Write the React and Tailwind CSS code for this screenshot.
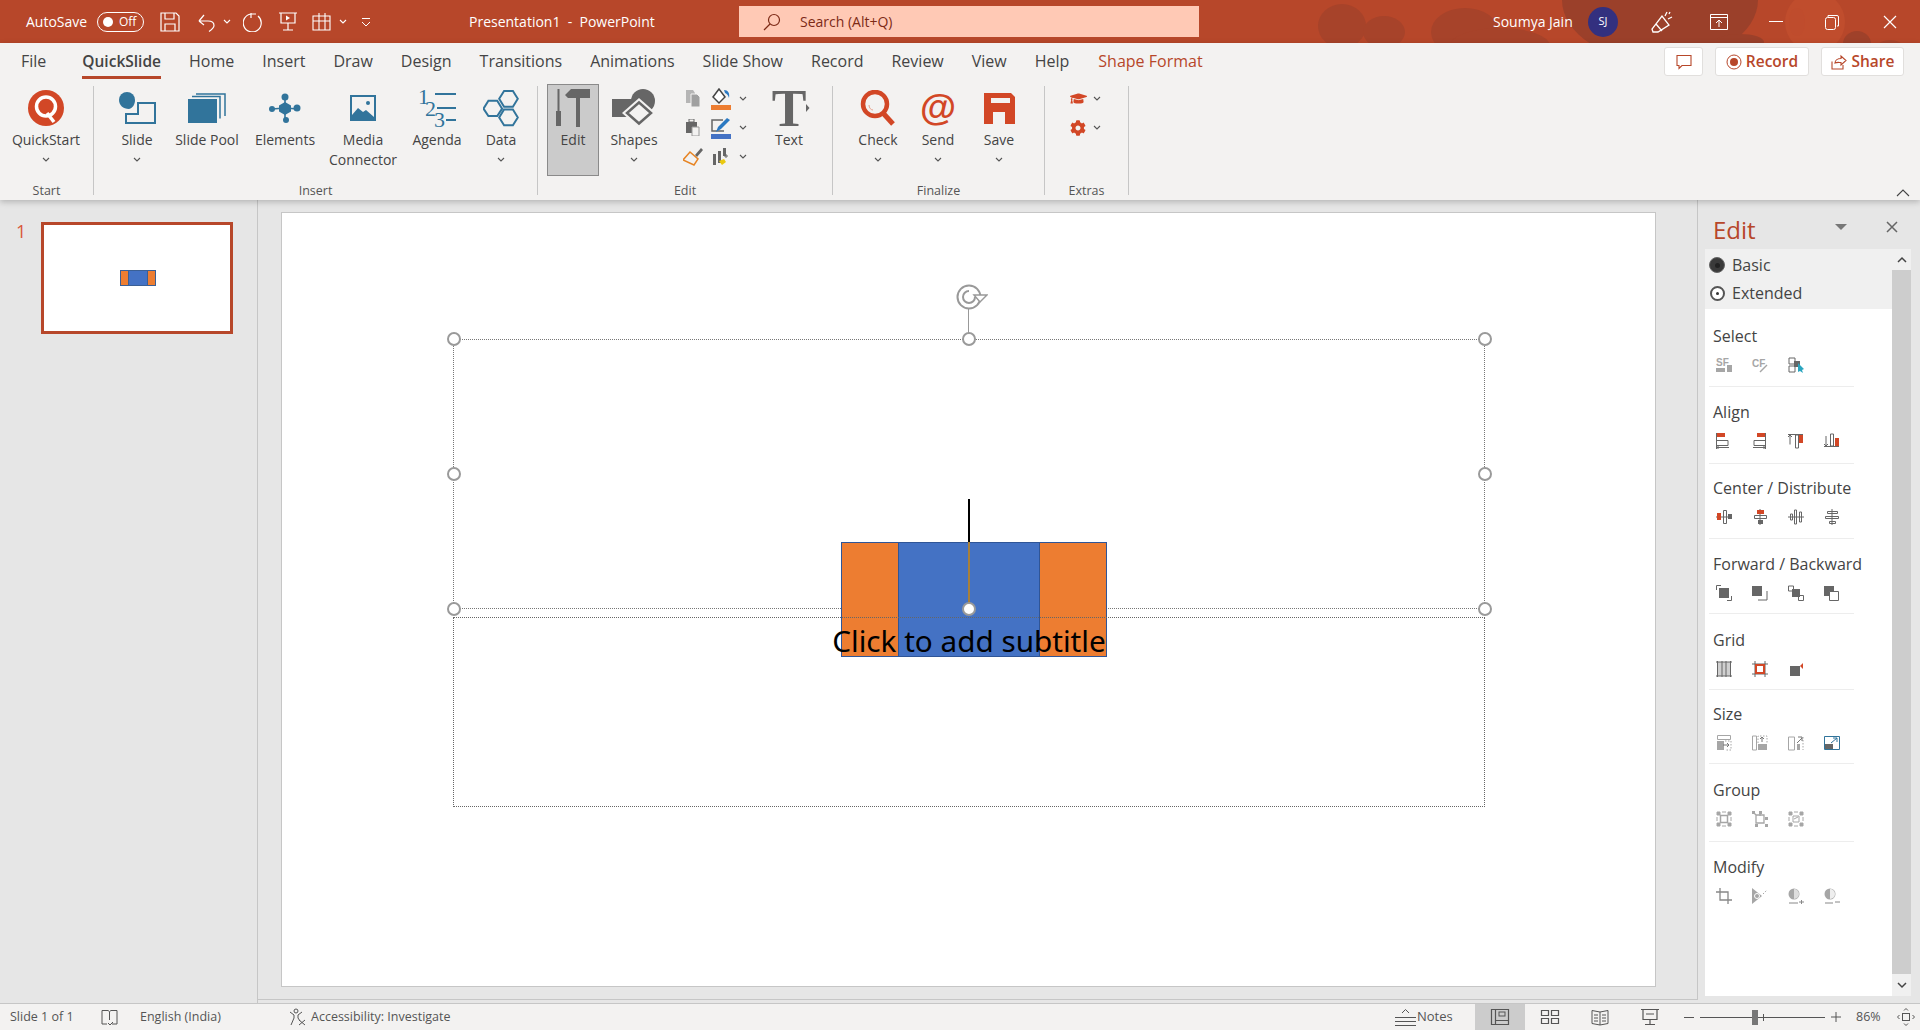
import { FaCog, FaGraduationCap } from "react-icons/fa";

const TEAL = "#31749b";
const RED = "#d24726";
const GRAY = "#666666";
const LIGHT = "#a6a6a6";

const Icon = ({ w = 16, h = 16, box, children, className = "" }) => (
  <svg width={w} height={h} viewBox={box || `0 0 ${w} ${h}`} fill="none" className={`shrink-0 ${className}`}>
    {children}
  </svg>
);

const Chevron = ({ color = "#555555", className = "" }) => (
  <Icon w={8} h={5} className={className}>
    <path d="M1 1l3 3 3-3" stroke={color} strokeWidth="1.1" />
  </Icon>
);

// Title bar drawings
const QatSave = () => (
  <Icon w={20} h={20}>
    <path d="M1 1h15l3 3v15H1z M5 1v6h9V1 M5 19v-7h10v7" stroke="white" strokeWidth="1.2" />
  </Icon>
);
const QatUndo = () => (
  <Icon w={19} h={20}>
    <path d="M2 9l5-6 M2 9h9c4 0 6 2 6 4.500 0 2-2 4-5 6 M2 9l5 4" stroke="white" strokeWidth="1.2" />
  </Icon>
);
const QatRedo = () => (
  <Icon w={21} h={20}>
    <path d="M8 2A9 9 0 1 0 15 4 M8 1v5 M8 2l5 0" stroke="white" strokeWidth="1.2" />
  </Icon>
);
const QatPresent = () => (
  <Icon w={18} h={20}>
    <path d="M0 1h18 M2 1v10h14V1 M9 11v7 M4 18h10" stroke="white" strokeWidth="1.2" />
    <path d="M7 3.500l4 2.500-4 2.500z" fill="white" />
  </Icon>
);
const QatTable = () => (
  <Icon w={19} h={20}>
    <path d="M1 4h17v14H1z M1 9h17 M7 1v17 M13 1v17" stroke="white" strokeWidth="1.1" />
  </Icon>
);

const TitleBlotches = () => (
  <svg width="1920" height="43" viewBox="0 0 1920 43" className="absolute inset-0 pointer-events-none">
    <ellipse cx="1342" cy="26" rx="24" ry="22" fill="#a7432a" />
    <ellipse cx="1384" cy="32" rx="21" ry="16" fill="#a7432a" />
    <ellipse cx="1465" cy="32" rx="34" ry="24" fill="#a7432a" />
    <ellipse cx="1500" cy="46" rx="50" ry="18" fill="#a7432a" />
    <ellipse cx="1660" cy="0" rx="98" ry="62" fill="#9b402a" />
    <ellipse cx="1740" cy="42" rx="24" ry="8" fill="#9b402a" />
    <ellipse cx="1815" cy="22" rx="30" ry="30" fill="#c04d2d" />
    <ellipse cx="1797" cy="22" rx="8" ry="14" fill="#bf4c2d" />
    <ellipse cx="1857" cy="44" rx="14" ry="13" fill="#9f412a" />
    <ellipse cx="1890" cy="46" rx="12" ry="6" fill="#a7432a" />
  </svg>
);

// Ribbon drawings
const QuickStartIcon = () => (
  <Icon w={36} h={36}>
    <circle cx="18" cy="18" r="18" fill={RED} />
    <circle cx="18" cy="16.500" r="9.500" stroke="white" strokeWidth="3.500" />
    <path d="M19 23l7 9" stroke="white" strokeWidth="3.500" />
  </Icon>
);
const SlideIcon = () => (
  <Icon w={37} h={32}>
    <path d="M0 8a8 8 0 1 1 16 0c0 4-2 8-6 9C4 17 0 13 0 8z" fill={TEAL} />
    <path d="M19 11h17v20H7V22h12z" stroke={TEAL} strokeWidth="2" />
  </Icon>
);
const SlidePoolIcon = () => (
  <Icon w={38} h={30}>
    <rect x="0" y="6" width="29" height="24" fill={TEAL} />
    <path d="M4 3.500h28v22 M8 1h29v22" stroke={TEAL} strokeWidth="1.500" />
  </Icon>
);
const ElementsIcon = () => (
  <Icon w={32} h={30}>
    <path d="M3 16l13-1 13 1 M16 3v25" stroke={TEAL} strokeWidth="1.600" />
    <path d="M16 9l6 3.500v6L16 22l-6-3.500v-6z" fill={TEAL} />
    <circle cx="16" cy="4" r="3.500" fill={TEAL} />
    <circle cx="3" cy="16" r="3" fill={TEAL} />
    <circle cx="28" cy="15" r="3.500" fill={TEAL} />
    <circle cx="17" cy="27" r="3" fill={TEAL} />
  </Icon>
);
const MediaIcon = () => (
  <Icon w={26} h={26}>
    <rect width="26" height="26" fill={TEAL} />
    <rect x="2" y="2" width="22" height="20" fill="#f3f2f1" />
    <path d="M2 20l6-7 5 4 3-2 8 7v4H2z" fill={TEAL} />
    <circle cx="18" cy="8" r="2" fill={TEAL} />
  </Icon>
);
const AgendaIcon = () => (
  <svg width="39" height="38" viewBox="0 0 39 38" className="shrink-0 overflow-visible">
    <text fontFamily="Liberation Serif" fontSize="22" fill={TEAL}>
      <tspan x="0" y="15">1</tspan>
      <tspan x="7" y="27">2</tspan>
      <tspan x="16" y="38">3</tspan>
    </text>
    <path d="M17 5h21 M19 19h19 M28 31h10" stroke={TEAL} strokeWidth="2" />
  </svg>
);
const DataIcon = () => (
  <Icon w={36} h={37}>
    <path d="M21 1h9l5 8-5 8h-9l-5-8z M5 11h9l5 8-5 7.500H5L0 19z M21 20h9l5 8-5 8h-9l-5-8z" transform="translate(.5 0) scale(.98)" stroke={TEAL} strokeWidth="2" />
  </Icon>
);
const ToolsIcon = () => (
  <Icon w={34} h={38}>
    <rect x="1.500" y="0" width="2" height="22" fill={GRAY} />
    <rect x="0" y="22" width="5" height="15" fill={GRAY} />
    <path d="M9 6l6-6h19v9H24v29h-4V9h-8z" fill={GRAY} />
  </Icon>
);
const ShapesIcon = () => (
  <Icon w={44} h={38}>
    <path d="M0 10h20v18H0z" fill={GRAY} />
    <circle cx="31" cy="12" r="12" fill={GRAY} />
    <path d="M27 9l17 15-17 15-17-15z" fill="#f3f2f1" />
    <path d="M27 13.500l12 10.500-12 10.500-12-10.500z" fill="#f3f2f1" stroke={GRAY} strokeWidth="2.500" />
  </Icon>
);
const CopyIcon = () => (
  <Icon w={16} h={17}>
    <path d="M1 0h7l2 3v10H1z" fill="#b5b5b5" />
    <path d="M6 4h6l3 3v10H6z" fill="#a0a0a0" stroke="#f3f2f1" />
  </Icon>
);
const BucketIcon = () => (
  <Icon w={20} h={22}>
    <path d="M8 1l-6 8 6 6 6-6z" stroke="#444444" strokeWidth="1.500" fill="white" />
    <path d="M13 2c4 0 6 3 5 8-1-3-2-4-4-5z" fill="#2b79c2" />
    <rect y="17" width="20" height="5" fill="#ed7d31" />
  </Icon>
);
const PasteIcon = () => (
  <Icon w={14} h={17}>
    <path d="M0 3h11v11H0z" fill={GRAY} />
    <rect x="3" y="0" width="5" height="3" fill="#f3f2f1" stroke={GRAY} />
    <path d="M6 8h7v9H6z" fill="#f3f2f1" stroke="#999999" />
  </Icon>
);
const PenBoxIcon = () => (
  <Icon w={20} h={22}>
    <path d="M12 3H1v11h12" stroke={GRAY} strokeWidth="1.500" />
    <path d="M5 15l2-5 9-9 3 2-9 9z" fill="#2b79c2" />
    <rect y="17" width="20" height="5" fill="#4472c4" />
  </Icon>
);
const BrushIcon = () => (
  <Icon w={20} h={19}>
    <path d="M12 8l6-7 2 2-6 7z" fill="#666666" />
    <path d="M7 5l8 7-4 6-11-5z" fill="#f2f2f2" stroke="#e78423" strokeWidth="1.500" />
  </Icon>
);
const ChartIcon = () => (
  <Icon w={16} h={17}>
    <path d="M0 6h3v11H0z M5 3h3v12H5z M10 0h3v8h-3z" fill={GRAY} />
    <path d="M6 13l5-2 2 3-4 3z" fill="#eac90f" />
    <path d="M13 6v4 M11 8h4" stroke="#666666" />
  </Icon>
);
const TextIcon = () => (
  <svg width="44" height="38" viewBox="0 0 44 38" className="shrink-0 overflow-visible">
    <text x="22" y="37" textAnchor="middle" fontFamily="Liberation Serif" fontWeight="700" fontSize="52" fill={GRAY}>T</text>
    <path d="M39 15l3.500 4-3.500 4z" fill={GRAY} />
  </svg>
);
const CheckIcon = () => (
  <Icon w={36} h={36}>
    <circle cx="15" cy="14" r="12" stroke={RED} strokeWidth="4.500" />
    <path d="M23 23l10 11" stroke={RED} strokeWidth="5" />
    <path d="M9 15c0 3 2 5 4 5" stroke="#e8a08a" strokeWidth="1" />
  </Icon>
);
const SendIcon = () => (
  <svg width="34" height="36" viewBox="0 0 34 36" className="shrink-0 overflow-visible">
    <text x="17" y="30" textAnchor="middle" fontFamily="Liberation Sans" fontSize="37" fontWeight="700" fill={RED}>@</text>
  </svg>
);
const SaveRedIcon = () => (
  <Icon w={31} h={31}>
    <path d="M0 0h27l4 4v27H0z" fill={RED} />
    <rect x="7" y="5" width="19" height="5" fill="#f3f2f1" />
    <rect x="9" y="19" width="12" height="12" fill="#f3f2f1" />
  </Icon>
);

// Task pane drawings
const c = { g: GRAY, r: RED, l: LIGHT };
const SF = () => (
  <svg width="16" height="16" viewBox="0 0 16 16" className="overflow-visible">
    <text x="0" y="9" fontFamily="Liberation Sans" fontWeight="700" fontSize="10" fill={c.l}>SF</text>
    <path d="M0 11h9v4H0z M11 8h5v7h-5z" fill={c.l} />
  </svg>
);
const CF = () => (
  <svg width="16" height="16" viewBox="0 0 16 16" className="overflow-visible">
    <text x="0" y="10" fontFamily="Liberation Sans" fontWeight="700" fontSize="10" fill={c.l}>CF</text>
    <path d="M8 15l7-7" stroke={c.l} strokeWidth="1.500" />
  </svg>
);
const SelIcon = () => (
  <Icon>
    <path d="M1 1h6v6H1z M1 9h6v6H1z" stroke={c.g} />
    <rect x="6" y="4" width="6" height="6" fill={c.g} />
    <path d="M10 6l6 6-2 1 1 3-3-2-2 1z" fill="#2aa5bf" />
  </Icon>
);
const AlignA = () => (
  <Icon>
    <path d="M0.500 0v16 M1 7.500h11v5H1" stroke={c.g} />
    <path d="M1 14.500h12 M1 14.500l2-2 M1 14.500l2 2" stroke={c.g} />
    <rect x="1" y="0" width="8" height="4" fill={c.r} />
  </Icon>
);
const AlignB = () => (
  <Icon>
    <path d="M13.500 0v16 M13 7.500H2v5h11" stroke={c.g} />
    <path d="M13 14.500H1 M13 14.500l-2-2 M13 14.500l-2 2" stroke={c.g} />
    <rect x="5" y="0" width="8" height="4" fill={c.r} />
  </Icon>
);
const AlignC = () => (
  <Icon>
    <path d="M0 1.500h15 M2 1.500v10 M0 4l2-2 2 2 M7.500 2h3v13h-3z" stroke={c.g} />
    <rect x="11" y="2" width="4" height="8" fill={c.r} />
  </Icon>
);
const AlignD = () => (
  <Icon>
    <path d="M0 13.500h15 M2 3v10 M0 11l2 2 2-2 M6.500 1h3v12h-3z" stroke={c.g} />
    <rect x="11" y="5" width="4" height="8" fill={c.r} />
  </Icon>
);
const CenterA = () => (
  <Icon>
    <path d="M0 8h16 M7.500 1.500h3v13h-3z" stroke={c.g} />
    <rect x="1" y="4" width="4" height="7" fill={c.r} />
    <rect x="12" y="5" width="4" height="5" fill={c.g} />
  </Icon>
);
const CenterB = () => (
  <Icon>
    <path d="M8 0v16 M2.500 6.500h12v3h-12z" stroke={c.g} fill="#fff" />
    <rect x="5" y="1" width="7" height="4" fill={c.r} />
    <rect x="6" y="11" width="5" height="4" fill={c.g} />
  </Icon>
);
const CenterC = () => (
  <Icon>
    <path d="M0 8h16 M2.500 5h2v6h-2z M6.500 1h2v14h-2z M11.500 3h2v10h-2z" stroke={c.g} fill="#fff" />
  </Icon>
);
const CenterD = () => (
  <Icon>
    <path d="M8 0v16 M3.500 2.500h10v2h-10z M1.500 7.500h13v2h-13z M5.500 12.500h6v2h-6z" stroke={c.g} fill="#fff" />
  </Icon>
);
const FwdA = () => (
  <Icon>
    <path d="M0.500 5V0.500H5 M15.500 11v4.500H11" stroke={c.g} />
    <rect x="3" y="3" width="10" height="10" fill={c.g} />
  </Icon>
);
const FwdB = () => (
  <Icon>
    <path d="M15 6v9H6" stroke={c.g} />
    <rect x="0" y="1" width="10" height="10" fill={c.g} />
  </Icon>
);
const FwdC = () => (
  <Icon>
    <path d="M0.500 1h5v5h-5z M10.500 10.500h5v5h-5z" stroke={c.g} />
    <rect x="4" y="4" width="8" height="8" fill={c.g} />
  </Icon>
);
const FwdD = () => (
  <Icon>
    <rect x="0" y="1" width="10" height="10" fill={c.g} />
    <path d="M5.500 6.500h9v9h-9z" stroke={c.g} fill="#fff" />
  </Icon>
);
const GridA = () => (
  <Icon>
    <rect x="2" y="1" width="12" height="14" fill="#d0d0d0" />
    <path d="M0 1h16 M0 15h16 M1.500 0v16 M6 0v16 M10 0v16 M14.500 0v16" stroke={c.g} />
  </Icon>
);
const GridB = () => (
  <Icon>
    <path d="M3 0v16 M13 0v16 M0 3h16 M0 13h16" stroke={c.g} />
    <path d="M4 4h8v8H4z" fill="#fff" stroke={c.r} strokeWidth="2" />
  </Icon>
);
const GridC = () => (
  <Icon>
    <rect x="2" y="5" width="10" height="10" fill={c.g} />
    <path d="M12 5l3-3v6z" fill={c.r} />
  </Icon>
);
const SizeA = () => (
  <Icon>
    <path d="M1.500 0.500h13v4h-13z" stroke={c.l} />
    <rect x="1" y="6" width="7" height="9" fill={c.l} />
    <path d="M9 6h6v9H9" stroke={c.l} strokeDasharray="1.500 1.500" />
    <path d="M7 10h6 M11 8l2 2-2 2" stroke="#777" />
  </Icon>
);
const SizeB = () => (
  <Icon>
    <path d="M0.500 1h4v14h-4z" stroke={c.l} />
    <rect x="6" y="9" width="9" height="6" fill={c.l} />
    <path d="M6 8V1h9v7" stroke={c.l} strokeDasharray="1.500 1.500" />
    <path d="M10 7V2 M8 4l2-2 2 2" stroke="#777" />
  </Icon>
);
const SizeC = () => (
  <Icon>
    <path d="M0.500 2h6v13h-6z" stroke={c.l} />
    <rect x="9" y="9" width="3" height="6" fill={c.l} />
    <path d="M15 2v13" stroke={c.l} strokeDasharray="1.500 1.500" />
    <path d="M9 8l5-5 M10 2h4v4" stroke="#777" />
  </Icon>
);
const SizeD = () => (
  <Icon>
    <path d="M0.500 1.500h15v13h-15z" stroke={TEAL} fill="#fff" />
    <rect x="1" y="9" width="8" height="5" fill={c.g} />
    <path d="M7 8l6-5 M9 3h4v4" stroke={TEAL} />
  </Icon>
);
const GroupA = () => (
  <Icon>
    <path d="M1 1h3v3H1z M12 1h3v3h-3z M1 12h3v3H1z M12 12h3v3h-3z" fill={c.l} stroke={c.l} />
    <path d="M6 1h4 M6 15h4 M1 6v4 M15 6v4" stroke={c.l} />
    <path d="M4.500 4.500h7v7h-7z" stroke={c.l} strokeWidth="1.500" />
  </Icon>
);
const GroupB = () => (
  <Icon>
    <path d="M0 0h3v3H0z M7 0h3v3H7z M13 6h3v3h-3z M3 13h3v3H3z M13 13h3v3h-3z" fill={c.l} />
    <path d="M2 2l2 2 M4 4h8v8H4z M8 3v2" stroke={c.l} strokeWidth="1.300" />
  </Icon>
);
const GroupC = () => (
  <Icon>
    <path d="M1 1h3v3H1z M12 1h3v3h-3z M1 12h3v3H1z M12 12h3v3h-3z" stroke={c.l} fill={c.l} />
    <path d="M6 1h4 M6 15h4 M1 6v4 M15 6v4" stroke={c.l} />
    <path d="M5 5h6v6H5z M6 8l4-2" stroke={c.l} />
  </Icon>
);
const ModA = () => (
  <Icon>
    <path d="M4 0v12h12 M0 4h12v12" stroke="#888888" strokeWidth="1.300" />
  </Icon>
);
const ModB = () => (
  <Icon>
    <path d="M0 0l10 8-10 8z" fill={c.l} />
    <path d="M11 6l4-4" stroke={c.l} strokeDasharray="1.500 1.500" />
    <circle cx="5" cy="8" r="2.500" stroke="#fff" />
  </Icon>
);
const ModC = () => (
  <Icon>
    <circle cx="6" cy="6" r="5.500" fill={c.l} />
    <path d="M6 1a5 5 0 0 1 0 10z" fill="#dddddd" />
    <path d="M1 15h9 M11 14h5 M13.500 12v4" stroke="#888" />
  </Icon>
);
const ModD = () => (
  <Icon>
    <circle cx="6" cy="6" r="5.500" fill={c.l} />
    <path d="M6 1a5 5 0 0 1 0 10z" fill="#eeeeee" />
    <path d="M1 15h8 M11 14h5" stroke="#888" />
  </Icon>
);

const sections = [
  { title: "Select", box: "h-[78px] pt-[15px]", icons: [SF, CF, SelIcon] },
  { title: "Align", box: "h-[77px] pt-[13px]", icons: [AlignA, AlignB, AlignC, AlignD] },
  { title: "Center / Distribute", box: "h-[75px] pt-[12px]", icons: [CenterA, CenterB, CenterC, CenterD] },
  { title: "Forward / Backward", box: "h-[75px] pt-[13px]", icons: [FwdA, FwdB, FwdC, FwdD] },
  { title: "Grid", box: "h-[76px] pt-[14px]", icons: [GridA, GridB, GridC] },
  { title: "Size", box: "h-[74px] pt-[12px]", icons: [SizeA, SizeB, SizeC, SizeD] },
  { title: "Group", box: "h-[78px] pt-[14px]", icons: [GroupA, GroupB, GroupC] },
  { title: "Modify", box: "h-[76px] pt-[13px]", icons: [ModA, ModB, ModC, ModD], last: true },
];

const tabs = ["Home", "Insert", "Draw", "Design", "Transitions", "Animations", "Slide Show", "Record", "Review", "View", "Help"];

const BigButton = ({ icon, label, label2, chevron, className = "" }) => (
  <div className={`flex flex-col items-center shrink-0 ${className}`}>
    <div className="h-[44px] w-full flex items-center justify-center">{icon}</div>
    <span className="leading-[20px] whitespace-nowrap">{label}</span>
    {label2 && <span className="leading-[20px] whitespace-nowrap">{label2}</span>}
    {chevron && <Chevron className="mt-[7px]" />}
  </div>
);

const Group = ({ label, className, children }) => (
  <div className={`h-[109px] shrink-0 border-r border-[#c6c6c6] flex flex-col ${className}`}>
    <div className="h-[96px] flex">{children}</div>
    <div className="h-[13px] leading-[18px] text-center text-[12.5px] text-[#555555]">{label}</div>
  </div>
);

const SmallRow = ({ a, b, chevronClass = "" }) => (
  <div className="h-[29px] flex items-center">
    <div className="w-[30px] flex justify-center">{a}</div>
    <div className="w-[26px] flex justify-center">{b}</div>
    <Chevron className={`ml-[5px] ${chevronClass}`} />
  </div>
);

const Handle = ({ className }) => (
  <div className={`absolute w-[14px] h-[14px] rounded-full bg-white border-2 border-[#9a9a9a] ${className}`} />
);

const ViewIcon = ({ children }) => <Icon w={20} h={18}>{children}</Icon>;

export default function App() {
  return (
    <div className="w-[1920px] h-[1030px] overflow-hidden flex flex-col bg-[#e6e6e6] text-[#444444] [font-family:'Open_Sans',sans-serif]">
      {/* Title bar */}
      <div className="relative h-[43px] shrink-0 flex items-center bg-[#b7472a] text-white text-[14px]">
        <TitleBlotches />
        <div className="relative flex items-center w-full">
          <span className="ml-[26px] w-[62px] whitespace-nowrap">AutoSave</span>
          <div className="ml-[9px] w-[47px] h-[20px] rounded-full border border-white flex items-center pl-[5px] gap-[6px]">
            <span className="w-[10px] h-[10px] rounded-full bg-white" />
            <span className="text-[12px] leading-none">Off</span>
          </div>
          <div className="ml-[16px] flex items-center"><QatSave /></div>
          <div className="ml-[17px] flex items-center"><QatUndo /></div>
          <Chevron color="#ffffff" className="ml-[7px]" />
          <div className="ml-[12px] flex items-center"><QatRedo /></div>
          <div className="ml-[15px] flex items-center"><QatPresent /></div>
          <div className="ml-[15px] flex items-center"><QatTable /></div>
          <Chevron color="#ffffff" className="ml-[8px]" />
          <Icon w={10} h={10} className="ml-[14px]">
            <path d="M1 1.500h8 M1 5l4 4 4-4" stroke="white" />
          </Icon>
          <span className="ml-[98px] w-[190px] whitespace-nowrap">Presentation1&nbsp; -&nbsp; PowerPoint</span>
          <div className="ml-[80px] w-[460px] h-[31px] bg-[#ffc9b5] text-[#7d2a16] flex items-center">
            <Icon w={18} h={18} className="ml-[24px]">
              <circle cx="11" cy="7" r="5.500" stroke="#7d2a16" strokeWidth="1.200" />
              <path d="M7 11l-6 6" stroke="#7d2a16" strokeWidth="1.200" />
            </Icon>
            <span className="ml-[19px]">Search (Alt+Q)</span>
          </div>
          <span className="ml-[294px] w-[84px] whitespace-nowrap">Soumya Jain</span>
          <div className="ml-[11px] w-[30px] h-[30px] rounded-full bg-[#33307f] flex items-center justify-center text-[11px]">SJ</div>
          <Icon w={22} h={24} className="ml-[33px]">
            <path d="M2 22L1 19 11 6l7 9-11 7z M5 14l6 7 M14 6l2-4 M17 9l4-2 M18 4l1-2" stroke="white" strokeWidth="1.300" />
          </Icon>
          <Icon w={18} h={16} className="ml-[37px]">
            <path d="M0.500 0.500h17v15H0.500z M1 3.500h16 M9 13V6 M6 9l3-3 3 3" stroke="white" />
          </Icon>
          <div className="ml-[41px] w-[14px] h-[1px] bg-white" />
          <Icon w={14} h={16} className="ml-[42px]">
            <path d="M3 3V1.500h9a1.500 1.500 0 0 1 1.500 1.500v9H12" stroke="white" />
            <rect x="0.500" y="3.500" width="10" height="12" rx="2" stroke="white" />
          </Icon>
          <Icon w={14} h={14} className="ml-[44px]">
            <path d="M1 1l12 12 M13 1L1 13" stroke="white" strokeWidth="1.200" />
          </Icon>
        </div>
      </div>

      {/* Tabs and ribbon */}
      <div className="relative z-10 h-[157px] shrink-0 bg-[#f3f2f1] shadow-[0_2px_6px_rgba(0,0,0,0.22)] flex flex-col">
        <div className="h-[37px] flex items-stretch text-[16px] text-[#444444]">
          <span className="ml-[21px] mr-[36px] leading-[37px]">File</span>
          <span className="font-semibold leading-[37px] h-[36px] border-b-[3px] border-[#b7472a] text-[15.5px]">QuickSlide</span>
          <div className="flex ml-[28px] gap-[28px]">
            {tabs.map((t) => (
              <span key={t} className="leading-[37px] whitespace-nowrap">{t}</span>
            ))}
            <span className="leading-[37px] whitespace-nowrap text-[#b7472a] ml-[1px]">Shape Format</span>
          </div>
          <div className="ml-auto mr-[16px] mt-[4px] flex gap-[12px] h-[29px] text-[#b7472a] font-semibold text-[15.5px]">
            <div className="w-[39px] bg-white border border-[#e1dfdd] rounded-[3px] flex items-center justify-center">
              <Icon w={16} h={16}>
                <path d="M1 1.500h14v10H6L3 14.500v-3H1z" stroke="#b7472a" strokeWidth="1.100" />
              </Icon>
            </div>
            <div className="w-[94px] bg-white border border-[#e1dfdd] rounded-[3px] flex items-center justify-center gap-[4px]">
              <Icon w={16} h={16}>
                <circle cx="8" cy="8" r="7" stroke="#b7472a" />
                <circle cx="8" cy="8" r="4" fill="#b7472a" />
              </Icon>
              <span>Record</span>
            </div>
            <div className="w-[83px] bg-white border border-[#e1dfdd] rounded-[3px] flex items-center justify-center gap-[5px]">
              <Icon w={16} h={16}>
                <path d="M1 7.500v7.500h11v-4 M4 9c0-3 3-4.500 6-4.500V2l5 4.500L10 11V8.500C8 8.500 6 8 4 9z" stroke="#b7472a" strokeWidth="1.100" />
              </Icon>
              <span>Share</span>
            </div>
          </div>
        </div>

        <div className="relative mt-[6px] flex text-[14px] text-[#444444]">
          <Group label="Start" className="w-[94px]">
            <BigButton className="w-[70px] ml-[11px]" icon={<QuickStartIcon />} label="QuickStart" chevron />
          </Group>
          <Group label="Insert" className="w-[444px]">
            <BigButton className="w-[60px] ml-[13px]" icon={<SlideIcon />} label="Slide" chevron />
            <BigButton className="w-[72px] ml-[4px]" icon={<SlidePoolIcon />} label="Slide Pool" />
            <BigButton className="w-[64px] ml-[10px]" icon={<ElementsIcon />} label="Elements" />
            <BigButton className="w-[76px] ml-[8px]" icon={<MediaIcon />} label="Media" label2="Connector" />
            <BigButton className="w-[62px] ml-[5px]" icon={<AgendaIcon />} label="Agenda" />
            <BigButton className="w-[50px] ml-[8px]" icon={<DataIcon />} label="Data" chevron />
          </Group>
          <Group label="Edit" className="w-[295px]">
            <BigButton
              className="w-[52px] h-[92px] ml-[9px] -mt-[2px] pt-[1px] bg-[#cbcbcb] border border-[#8a8a8a]"
              icon={<ToolsIcon />}
              label="Edit"
            />
            <BigButton className="w-[60px] ml-[5px]" icon={<ShapesIcon />} label="Shapes" chevron />
            <div className="ml-[14px] -mt-[2px] w-[72px] shrink-0">
              <SmallRow a={<CopyIcon />} b={<BucketIcon />} />
              <SmallRow a={<PasteIcon />} b={<PenBoxIcon />} />
              <SmallRow a={<BrushIcon />} b={<ChartIcon />} chevronClass="-ml-[1px]" />
            </div>
            <BigButton className="w-[50px] ml-[14px]" icon={<TextIcon />} label="Text" />
          </Group>
          <Group label="Finalize" className="w-[212px]">
            <BigButton className="w-[50px] ml-[20px]" icon={<CheckIcon />} label="Check" chevron />
            <BigButton className="w-[50px] ml-[10px]" icon={<SendIcon />} label="Send" chevron />
            <BigButton className="w-[50px] ml-[11px]" icon={<SaveRedIcon />} label="Save" chevron />
          </Group>
          <Group label="Extras" className="w-[84px]">
            <div className="ml-[21px] -mt-[2px] w-[44px]">
              <div className="h-[29px] flex items-center">
                <div className="w-[24px] flex justify-center"><FaGraduationCap size={17} color={RED} /></div>
                <Chevron className="ml-[3px]" />
              </div>
              <div className="h-[29px] flex items-center">
                <div className="w-[24px] flex justify-center"><FaCog size={16} color={RED} /></div>
                <Chevron className="ml-[3px]" />
              </div>
            </div>
          </Group>
          <Icon w={14} h={8} className="absolute right-[10px] top-[103px]">
            <path d="M1 7l6-6 6 6" stroke="#444444" strokeWidth="1.100" />
          </Icon>
        </div>
      </div>

      {/* Workspace */}
      <div className="h-[803px] shrink-0 flex">
        {/* Thumbnails */}
        <div className="w-[258px] shrink-0 border-r border-[#c6c6c6] flex items-start pt-[22px]">
          <span className="ml-[16px] w-[25px] text-[18px] leading-[18px] text-[#d9583a]">1</span>
          <div className="w-[192px] h-[112px] border-[3px] border-[#b7472a] bg-white flex items-center justify-center">
            <div className="ml-[2px] w-[36px] h-[16px] flex border border-[#3a5f95]">
              <div className="w-[7px] bg-[#ed7d31]" />
              <div className="flex-1 bg-[#4472c4] border-x border-[#3a5f95]" />
              <div className="w-[7px] bg-[#ed7d31]" />
            </div>
          </div>
        </div>

        {/* Slide area */}
        <div className="w-[1440px] shrink-0 h-[800px] border-r border-b border-[#c6c6c6] pl-[23px] pt-[12px]">
          <div className="relative w-[1375px] h-[775px] bg-white border border-[#c6c6c6]">
            {/* Title placeholder selection */}
            <div className="absolute left-[171px] top-[126px] w-[1032px] h-[270px] border border-dotted border-[#777777]" />
            {/* Stack of rectangles */}
            <div className="absolute left-[559px] top-[329px] w-[266px] h-[115px] flex border border-[#2f5597]">
              <div className="w-[56px] bg-[#ed7d31]" />
              <div className="flex-1 bg-[#4472c4] border-x border-[#2f5597]" />
              <div className="w-[66px] bg-[#ed7d31]" />
            </div>
            <div className="absolute left-[686px] top-[286px] w-[2px] h-[43px] bg-black" />
            <div className="absolute left-[686px] top-[329px] w-[2px] h-[64px] bg-[#a8803a]" />
            {/* Subtitle placeholder */}
            <div className="absolute left-[171px] top-[404px] w-[1032px] h-[190px] border border-dotted border-[#666666] text-center text-black text-[29.7px] leading-[46px] [font-family:'Noto_Sans',sans-serif]">
              Click to add subtitle
            </div>
            {/* Handles and rotate grip */}
            <div className="absolute left-[686px] top-[96px] w-[1px] h-[26px] bg-[#999999]" />
            <Icon w={32} h={26} className="absolute left-[674px] top-[71px]">
              <circle cx="13" cy="13" r="11.500" stroke="#999999" strokeWidth="2" />
              <path d="M13 7a6 6 0 1 0 6 6" stroke="#999999" strokeWidth="2" />
              <path d="M18 11l6 7 7-7z" fill="white" stroke="#999999" strokeWidth="1.500" />
            </Icon>
            <Handle className="left-[165px] top-[119px]" />
            <Handle className="left-[680px] top-[119px]" />
            <Handle className="left-[1196px] top-[119px]" />
            <Handle className="left-[165px] top-[254px]" />
            <Handle className="left-[1196px] top-[254px]" />
            <Handle className="left-[165px] top-[389px]" />
            <Handle className="left-[680px] top-[389px]" />
            <Handle className="left-[1196px] top-[389px]" />
          </div>
        </div>

        {/* Edit task pane */}
        <div className="flex-1 min-w-0 flex flex-col pl-[7px]">
          <div className="h-[49px] shrink-0 flex items-center pl-[8px]">
            <span className="text-[24px] leading-none text-[#b7472a] w-[123px] mt-[11px]">Edit</span>
            <Icon w={12} h={6} className="ml-[-1px] mt-[4px]">
              <path d="M0 0h12L6 6z" fill="#777777" />
            </Icon>
            <Icon w={12} h={12} className="ml-[39px] mt-[4px]">
              <path d="M1 1l10 10 M11 1L1 11" stroke="#666666" strokeWidth="1.500" />
            </Icon>
          </div>
          <div className="h-[747px] flex">
            <div className="w-[187px] shrink-0 bg-white flex flex-col text-[16px] text-[#444444]">
              <div className="h-[60px] shrink-0 bg-[#f0f0f0] flex flex-col pt-[2px]">
                <div className="h-[28px] flex items-center pl-[4px]">
                  <div className="w-[16px] h-[16px] rounded-full bg-[#3a3a3a] border border-[#666666] flex items-center justify-center">
                    <div className="w-[5px] h-[5px] rounded-full bg-[#222222]" />
                  </div>
                  <span className="ml-[7px]">Basic</span>
                </div>
                <div className="h-[28px] flex items-center pl-[5px]">
                  <div className="w-[15px] h-[15px] rounded-full bg-white border-2 border-[#555555] flex items-center justify-center">
                    <div className="w-[3px] h-[3px] rounded-full bg-[#333333]" />
                  </div>
                  <span className="ml-[7px]">Extended</span>
                </div>
              </div>
              {sections.map((s) => (
                <div key={s.title} className={`${s.box} shrink-0 ml-[4px] w-[145px] flex flex-col ${s.last ? "" : "border-b border-[#ededed]"}`}>
                  <span className="pl-[4px] leading-[24px] whitespace-nowrap">{s.title}</span>
                  <div className="flex -ml-[3px] mt-[9px]">
                    {s.icons.map((Ic, i) => (
                      <div key={i} className="w-[36px] flex justify-center"><Ic /></div>
                    ))}
                  </div>
                </div>
              ))}
            </div>
            <div className="w-[19px] shrink-0 flex flex-col bg-[#cdcdcd]">
              <div className="h-[21px] bg-[#f0f0f0] flex items-center justify-center">
                <Icon w={10} h={7}>
                  <path d="M1 6l4-4 4 4" stroke="#444444" strokeWidth="1.500" />
                </Icon>
              </div>
              <div className="flex-1" />
              <div className="h-[22px] bg-[#f0f0f0] flex items-center justify-center">
                <Icon w={10} h={7}>
                  <path d="M1 1l4 4 4-4" stroke="#444444" strokeWidth="1.500" />
                </Icon>
              </div>
            </div>
          </div>
        </div>
      </div>

      {/* Status bar */}
      <div className="h-[27px] shrink-0 border-t border-[#c6c6c6] bg-[#f3f2f1] flex items-center text-[12.5px] text-[#555555]">
        <span className="ml-[10px] w-[65px] whitespace-nowrap">Slide 1 of 1</span>
        <Icon w={17} h={17} className="ml-[26px]">
          <path d="M1 1.500h6l1.500 1 1.500-1h6V15h-5 M8.500 3v8 M1 1.500V15h5 M7 14l2 2 3-3" stroke="#555555" />
        </Icon>
        <span className="ml-[22px] w-[81px] whitespace-nowrap">English (India)</span>
        <Icon w={17} h={18} className="ml-[68px]">
          <circle cx="7" cy="3" r="2" stroke="#555555" />
          <path d="M1 4l4 3v3l-3 7 M13 4l-4 3v3l2 3 M10 12l6 5 M16 12l-6 5" stroke="#555555" />
        </Icon>
        <span className="ml-[5px] w-[137px] whitespace-nowrap">Accessibility: Investigate</span>
        <Icon w={21} h={18} className="ml-[947px]">
          <path d="M0 9.500h21 M0 13.500h21 M0 17.500h21 M7 5l3.500-3.500L14 5" stroke="#555555" />
        </Icon>
        <span className="ml-[1px] w-[58px] text-[13px] whitespace-nowrap">Notes</span>
        <div className="w-[50px] h-[26px] bg-[#cccccc] flex items-center justify-center">
          <ViewIcon>
            <path d="M1.500 1.500h17v15h-17z M5.500 1.500v15 M5.500 12.500h13" stroke="#555555" strokeWidth="1.200" />
            <rect x="9" y="4" width="6" height="4" stroke="#555555" />
          </ViewIcon>
        </div>
        <div className="w-[50px] flex justify-center">
          <ViewIcon>
            <path d="M1.500 2.500h7v5h-7z M11.500 2.500h7v5h-7z M1.500 10.500h7v5h-7z M11.500 10.500h7v5h-7z" stroke="#555555" strokeWidth="1.200" />
          </ViewIcon>
        </div>
        <div className="w-[50px] flex justify-center">
          <ViewIcon>
            <path d="M2 2.500l8 1.500 8-1.500v13L10 17l-8-1.500z M10 4v13 M4 7h4 M4 10h4 M4 13h4 M12 7h4 M12 10h4 M12 13h4" stroke="#555555" />
          </ViewIcon>
        </div>
        <div className="w-[50px] flex justify-center">
          <ViewIcon>
            <path d="M1 1.500h18 M3 1.500v10h14v-10 M10 11.500v5 M5 16.500h10 M6 6h8" stroke="#555555" strokeWidth="1.200" />
          </ViewIcon>
        </div>
        <div className="ml-[9px] w-[10px] h-[1px] bg-[#555555]" />
        <div className="relative ml-[6px] w-[125px] h-[1px] bg-[#555555]">
          <div className="absolute left-[52px] -top-[7px] w-[6px] h-[15px] bg-[#777777]" />
          <div className="absolute left-[63px] -top-[3px] w-[1px] h-[7px] bg-[#555555]" />
        </div>
        <Icon w={10} h={10} className="ml-[6px]">
          <path d="M0 5h10 M5 0v10" stroke="#555555" />
        </Icon>
        <span className="ml-[15px] w-[26px] whitespace-nowrap">86%</span>
        <Icon w={18} h={18} className="ml-[15px]">
          <rect x="5.500" y="5.500" width="7" height="7" stroke="#555555" />
          <path d="M7 2.500l2-2 2 2 M7 15.500l2 2 2-2 M2.500 7l-2 2 2 2 M15.500 7l2 2-2 2" stroke="#555555" />
        </Icon>
      </div>
    </div>
  );
}
